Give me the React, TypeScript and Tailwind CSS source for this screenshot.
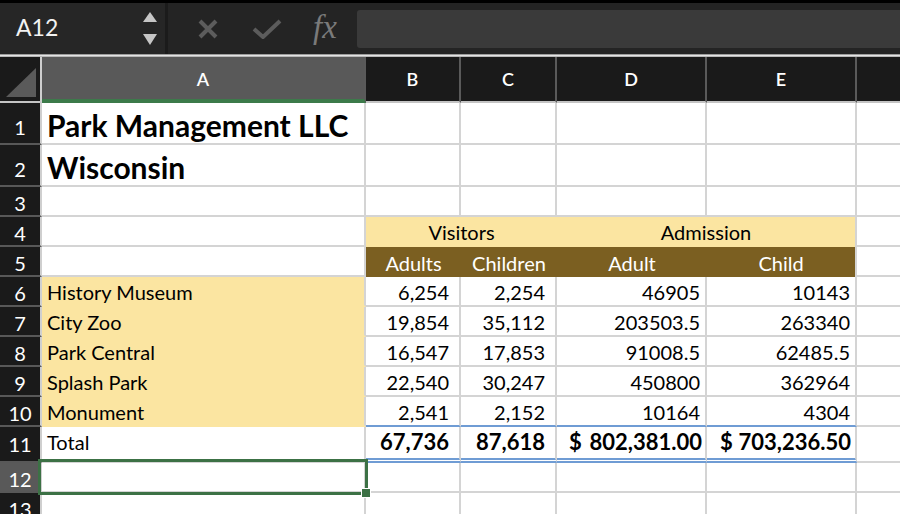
import React from "react";

const YEL = "bg-[#fbe5a1]";

function RowHead({ n, h, sel, pt = "pt-[3px]" }: { n: number; h: string; sel?: boolean; pt?: string }) {
  return (
    <div
      className={`${h} w-[42px] shrink-0 flex items-center justify-center border-r-2 border-r-[#cfcfcf] border-b-2 border-b-[#585858] text-white text-[20px] leading-none ${
        sel ? "bg-[#595959]" : "bg-[#1a1a1a]"
      }`}
    >
      <span className={pt}>{n}</span>
    </div>
  );
}

function Cell({
  w,
  children,
  cls = "",
}: {
  w: string;
  children?: React.ReactNode;
  cls?: string;
}) {
  return (
    <div className={`${w} shrink-0 flex items-end border-r-2 border-b-2 border-[#d4d4d4] ${cls}`}>
      {children}
    </div>
  );
}

const W = {
  A: "w-[324px]",
  B: "w-[95px]",
  C: "w-[96px]",
  D: "w-[150px]",
  E: "w-[150px]",
  F: "w-[60px]",
};

const data = [
  ["History Museum", "6,254", "2,254", "46905", "10143"],
  ["City Zoo", "19,854", "35,112", "203503.5", "263340"],
  ["Park Central", "16,547", "17,853", "91008.5", "62485.5"],
  ["Splash Park", "22,540", "30,247", "450800", "362964"],
  ["Monument", "2,541", "2,152", "10164", "4304"],
];

function EmptyRow({ n, h }: { n: number; h: string }) {
  return (
    <div className={`flex ${h}`}>
      <RowHead n={n} h={h} />
      <Cell w={W.A} />
      <Cell w={W.B} />
      <Cell w={W.C} />
      <Cell w={W.D} />
      <Cell w={W.E} />
      <Cell w={W.F} />
    </div>
  );
}

export default function App() {
  return (
    <div className="relative w-[900px] h-[514px] overflow-hidden bg-white font-['Lato','Liberation_Sans',sans-serif] text-black">
      {/* top stripe */}
      <div className="h-[3px] bg-black" />
      {/* formula bar */}
      <div className="flex h-[51px] bg-[#242424]">
        <div className="w-[165px] flex items-center justify-between bg-[#262626] pl-[16px] pr-[7px]">
          <span className="text-[#f2f2f2] text-[23px] leading-none pb-[3px]">A12</span>
          <svg width="16" height="40" viewBox="0 0 16 40">
            <polygon points="8,3 15,13 1,13" fill="#c6c6c6" />
            <polygon points="1,25 15,25 8,36" fill="#c6c6c6" />
          </svg>
        </div>
        <div className="w-[3px] bg-[#1b1b1b]" />
        <div className="w-[189px] flex items-center">
          <svg className="ml-[30px]" width="20" height="20" viewBox="0 0 20 20">
            <path d="M2 2 L18 18 M18 2 L2 18" stroke="#5c5c5c" strokeWidth="4" />
          </svg>
          <svg className="ml-[34px]" width="30" height="20" viewBox="0 0 30 20">
            <path d="M2 10 L11 18 L28 2" stroke="#5c5c5c" strokeWidth="4" fill="none" />
          </svg>
          <span className="ml-[31px] font-['Liberation_Serif',serif] italic text-[33px] leading-none text-[#7a7a7a] pb-[3px]">
            fx
          </span>
        </div>
        <div className="flex-1 mt-[7px] h-[38px] bg-[#3a3a3a] rounded-l-[3px]" />
      </div>
      {/* divider */}
      <div className="h-[1px] bg-[#9c9c9c]" />
      <div className="h-[1px] bg-[#e4e4e4]" />
      <div className="h-[1px] bg-[#b8b8b8]" />
      {/* column headers */}
      <div className="flex h-[46px] bg-[#1a1a1a] text-white text-[18px] font-semibold">
        <div className="w-[42px] h-[46px] shrink-0 border-r-2 border-r-[#cfcfcf] border-b-2 border-b-[#c4c4c4] flex items-end justify-end pr-[4px] pb-[4px]">
          <svg width="30" height="29" viewBox="0 0 30 29">
            <polygon points="0,29 30,29 30,0" fill="#5a5a5a" />
          </svg>
        </div>
        <div className="w-[324px] h-[46px] shrink-0 bg-[#595959] border-r-2 border-r-[#5a5a5a] border-b-4 border-b-[#3c7a4a] flex items-center justify-center">
          <span className="pt-[3px]">A</span>
        </div>
        {(["B", "C", "D", "E"] as const).map((c) => (
          <div
            key={c}
            className={`${W[c]} h-[46px] shrink-0 border-r-2 border-r-[#5a5a5a] border-b-2 border-b-[#c4c4c4] flex items-center justify-center`}
          >
            <span className="pt-[1px]">{c}</span>
          </div>
        ))}
        <div className="w-[60px] h-[46px] shrink-0 border-b-2 border-b-[#c4c4c4]" />
      </div>

      {/* row 1 */}
      <div className="flex h-[42px]">
        <RowHead n={1} h="h-[42px]" pt="pt-[7px]" />
        <Cell w={W.A} cls="pl-[5px]">
          <span className="text-[30px] font-bold leading-[36px]">Park Management LLC</span>
        </Cell>
        <Cell w={W.B} />
        <Cell w={W.C} />
        <Cell w={W.D} />
        <Cell w={W.E} />
        <Cell w={W.F} />
      </div>
      {/* row 2 */}
      <div className="flex h-[42px]">
        <RowHead n={2} h="h-[42px]" pt="pt-[7px]" />
        <Cell w={W.A} cls="pl-[5px]">
          <span className="text-[30px] font-bold leading-[36px]">Wisconsin</span>
        </Cell>
        <Cell w={W.B} />
        <Cell w={W.C} />
        <Cell w={W.D} />
        <Cell w={W.E} />
        <Cell w={W.F} />
      </div>
      <EmptyRow n={3} h="h-[30px]" />
      {/* row 4 */}
      <div className="flex h-[30px] text-[20px] leading-[24px]">
        <RowHead n={4} h="h-[30px]" />
        <Cell w={W.A} />
        <div className={`w-[191px] shrink-0 ${YEL} flex items-end justify-center pb-[3px]`}>Visitors</div>
        <div className={`w-[300px] shrink-0 ${YEL} flex items-end justify-center pb-[3px] border-r-2 border-[#d4d4d4]`}>
          Admission
        </div>
        <Cell w={W.F} />
      </div>
      {/* row 5 */}
      <div className="flex h-[30px] text-[20px] leading-[24px] text-white">
        <RowHead n={5} h="h-[30px]" />
        <Cell w={W.A} />
        <div className="w-[95px] shrink-0 bg-[#7b5f21] flex items-end justify-center pb-[2px]">Adults</div>
        <div className="w-[96px] shrink-0 bg-[#7b5f21] flex items-end justify-center pb-[2px]">Children</div>
        <div className="w-[150px] shrink-0 bg-[#7b5f21] flex items-end justify-center pb-[2px]">Adult</div>
        <div className="w-[150px] shrink-0 bg-[#7b5f21] flex items-end justify-center pb-[2px] border-r-2 border-[#d4d4d4]">
          Child
        </div>
        <Cell w={W.F} />
      </div>
      {/* rows 6-10 */}
      {data.map((r, i) => {
        const last = i === data.length - 1;
        const nb = last ? "border-b-[#6f9cd4]" : "";
        return (
          <div key={i} className="flex h-[30px] text-[20px] leading-[24px]">
            <RowHead n={6 + i} h="h-[30px]" />
            <Cell w={W.A} cls={`${YEL} border-b-[#fbe5a1] pl-[5px] pb-[1px]`}>
              {r[0]}
            </Cell>
            <Cell w={W.B} cls={`justify-end pr-[10px] pb-[1px] ${nb}`}>{r[1]}</Cell>
            <Cell w={W.C} cls={`justify-end pr-[10px] pb-[1px] ${nb}`}>{r[2]}</Cell>
            <Cell w={W.D} cls={`justify-end pr-[5px] pb-[1px] ${nb}`}>{r[3]}</Cell>
            <Cell w={W.E} cls={`justify-end pr-[5px] pb-[1px] ${nb}`}>{r[4]}</Cell>
            <Cell w={W.F} />
          </div>
        );
      })}
      {/* row 11 */}
      <div className="flex h-[36px] text-[20px] leading-[24px]">
        <RowHead n={11} h="h-[36px]" pt="pt-0" />
        <Cell w={W.A} cls="pl-[5px] pb-[7px]">Total</Cell>
        <Cell w={W.B} cls="justify-end pr-[10px] pb-[4px] text-[22px] font-bold border-b-[5px] border-b-[#6f9cd4] border-double">
          67,736
        </Cell>
        <Cell w={W.C} cls="justify-end pr-[10px] pb-[4px] text-[22px] font-bold border-b-[5px] border-b-[#6f9cd4] border-double">
          87,618
        </Cell>
        <Cell w={W.D} cls="justify-between pl-[12px] pr-[3px] pb-[4px] text-[22px] font-bold border-b-[5px] border-b-[#6f9cd4] border-double">
          <span>$</span>
          <span>802,381.00</span>
        </Cell>
        <Cell w={W.E} cls="justify-between pl-[13px] pr-[4px] pb-[4px] text-[22px] font-bold border-b-[5px] border-b-[#6f9cd4] border-double">
          <span>$</span>
          <span>703,236.50</span>
        </Cell>
        <Cell w={W.F} />
      </div>
      {/* row 12 */}
      <div className="flex h-[30px]">
        <RowHead n={12} h="h-[30px]" sel />
        <Cell w={W.A} />
        <Cell w={W.B} />
        <Cell w={W.C} />
        <Cell w={W.D} />
        <Cell w={W.E} />
        <Cell w={W.F} />
      </div>
      <EmptyRow n={13} h="h-[30px]" />

      {/* selection overlay */}
      <div className="absolute left-[38px] top-[459px] w-[330px] h-[36px] border-[3px] border-[#3c7145]" />
      <div className="absolute left-[361px] top-[488px] w-[10px] h-[10px] bg-[#3c7145] border border-white" />
    </div>
  );
}
